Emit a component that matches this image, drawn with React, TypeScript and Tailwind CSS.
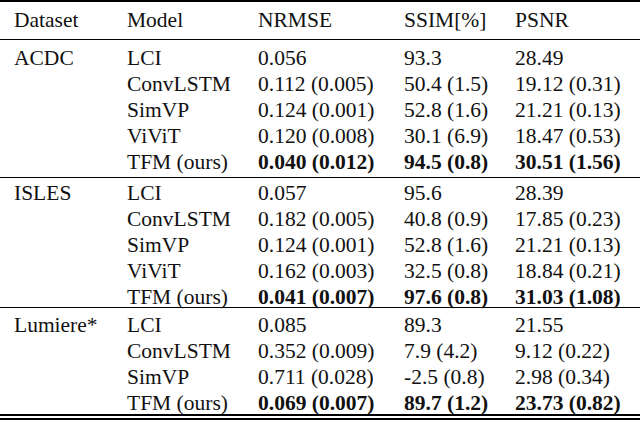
import React from "react";

type Row = { model: string; nrmse: string; ssim: string; psnr: string; best?: boolean };
type Section = { name: string; rows: Row[]; className: string };

const sections: Section[] = [
  {
    name: "ACDC",
    className: "h-[138px] pt-[5px] border-t border-black",
    rows: [
      { model: "LCI", nrmse: "0.056", ssim: "93.3", psnr: "28.49" },
      { model: "ConvLSTM", nrmse: "0.112 (0.005)", ssim: "50.4 (1.5)", psnr: "19.12 (0.31)" },
      { model: "SimVP", nrmse: "0.124 (0.001)", ssim: "52.8 (1.6)", psnr: "21.21 (0.13)" },
      { model: "ViViT", nrmse: "0.120 (0.008)", ssim: "30.1 (6.9)", psnr: "18.47 (0.53)" },
      { model: "TFM (ours)", nrmse: "0.040 (0.012)", ssim: "94.5 (0.8)", psnr: "30.51 (1.56)", best: true },
    ],
  },
  {
    name: "ISLES",
    className: "h-[130px] pt-[2px] border-t border-black",
    rows: [
      { model: "LCI", nrmse: "0.057", ssim: "95.6", psnr: "28.39" },
      { model: "ConvLSTM", nrmse: "0.182 (0.005)", ssim: "40.8 (0.9)", psnr: "17.85 (0.23)" },
      { model: "SimVP", nrmse: "0.124 (0.001)", ssim: "52.8 (1.6)", psnr: "21.21 (0.13)" },
      { model: "ViViT", nrmse: "0.162 (0.003)", ssim: "32.5 (0.8)", psnr: "18.84 (0.21)" },
      { model: "TFM (ours)", nrmse: "0.041 (0.007)", ssim: "97.6 (0.8)", psnr: "31.03 (1.08)", best: true },
    ],
  },
  {
    name: "Lumiere*",
    className: "h-[106px] pt-[4px] border-t border-black",
    rows: [
      { model: "LCI", nrmse: "0.085", ssim: "89.3", psnr: "21.55" },
      { model: "ConvLSTM", nrmse: "0.352 (0.009)", ssim: "7.9 (4.2)", psnr: "9.12 (0.22)" },
      { model: "SimVP", nrmse: "0.711 (0.028)", ssim: "-2.5 (0.8)", psnr: "2.98 (0.34)" },
      { model: "TFM (ours)", nrmse: "0.069 (0.007)", ssim: "89.7 (1.2)", psnr: "23.73 (0.82)", best: true },
    ],
  },
];

const cols = "grid grid-cols-[113px_131px_146px_111px_139px]";

function Cell({ children, bold }: { children: React.ReactNode; bold?: boolean }) {
  return <div className={`pl-[14px] whitespace-nowrap ${bold ? "font-bold" : ""}`}>{children}</div>;
}

export default function App() {
  return (
    <div
      className="w-[640px] h-[422px] bg-white text-[#111] text-[21.5px] leading-[26px] overflow-hidden"
      style={{ fontFamily: '"Liberation Serif", "Times New Roman", serif' }}
    >
      <div className="border-t-2 border-black">
        <div className={`${cols} h-[37px] pt-[5px]`}>
          <Cell>Dataset</Cell>
          <Cell>Model</Cell>
          <Cell>NRMSE</Cell>
          <Cell>SSIM[%]</Cell>
          <Cell>PSNR</Cell>
        </div>
      </div>

      {sections.map((section) => (
        <div key={section.name} className={section.className}>
          {section.rows.map((row, i) => (
            <div key={row.model} className={`${cols} h-[26px]`}>
              <Cell>{i === 0 ? section.name : ""}</Cell>
              <Cell>{row.model}</Cell>
              <Cell bold={row.best}>{row.nrmse}</Cell>
              <Cell bold={row.best}>{row.ssim}</Cell>
              <Cell bold={row.best}>{row.psnr}</Cell>
            </div>
          ))}
        </div>
      ))}

      <div className="relative bg-white border-t-2 border-black mt-[1px] pt-[2px]">
        <div className="border-t-2 border-black" />
      </div>
    </div>
  );
}
